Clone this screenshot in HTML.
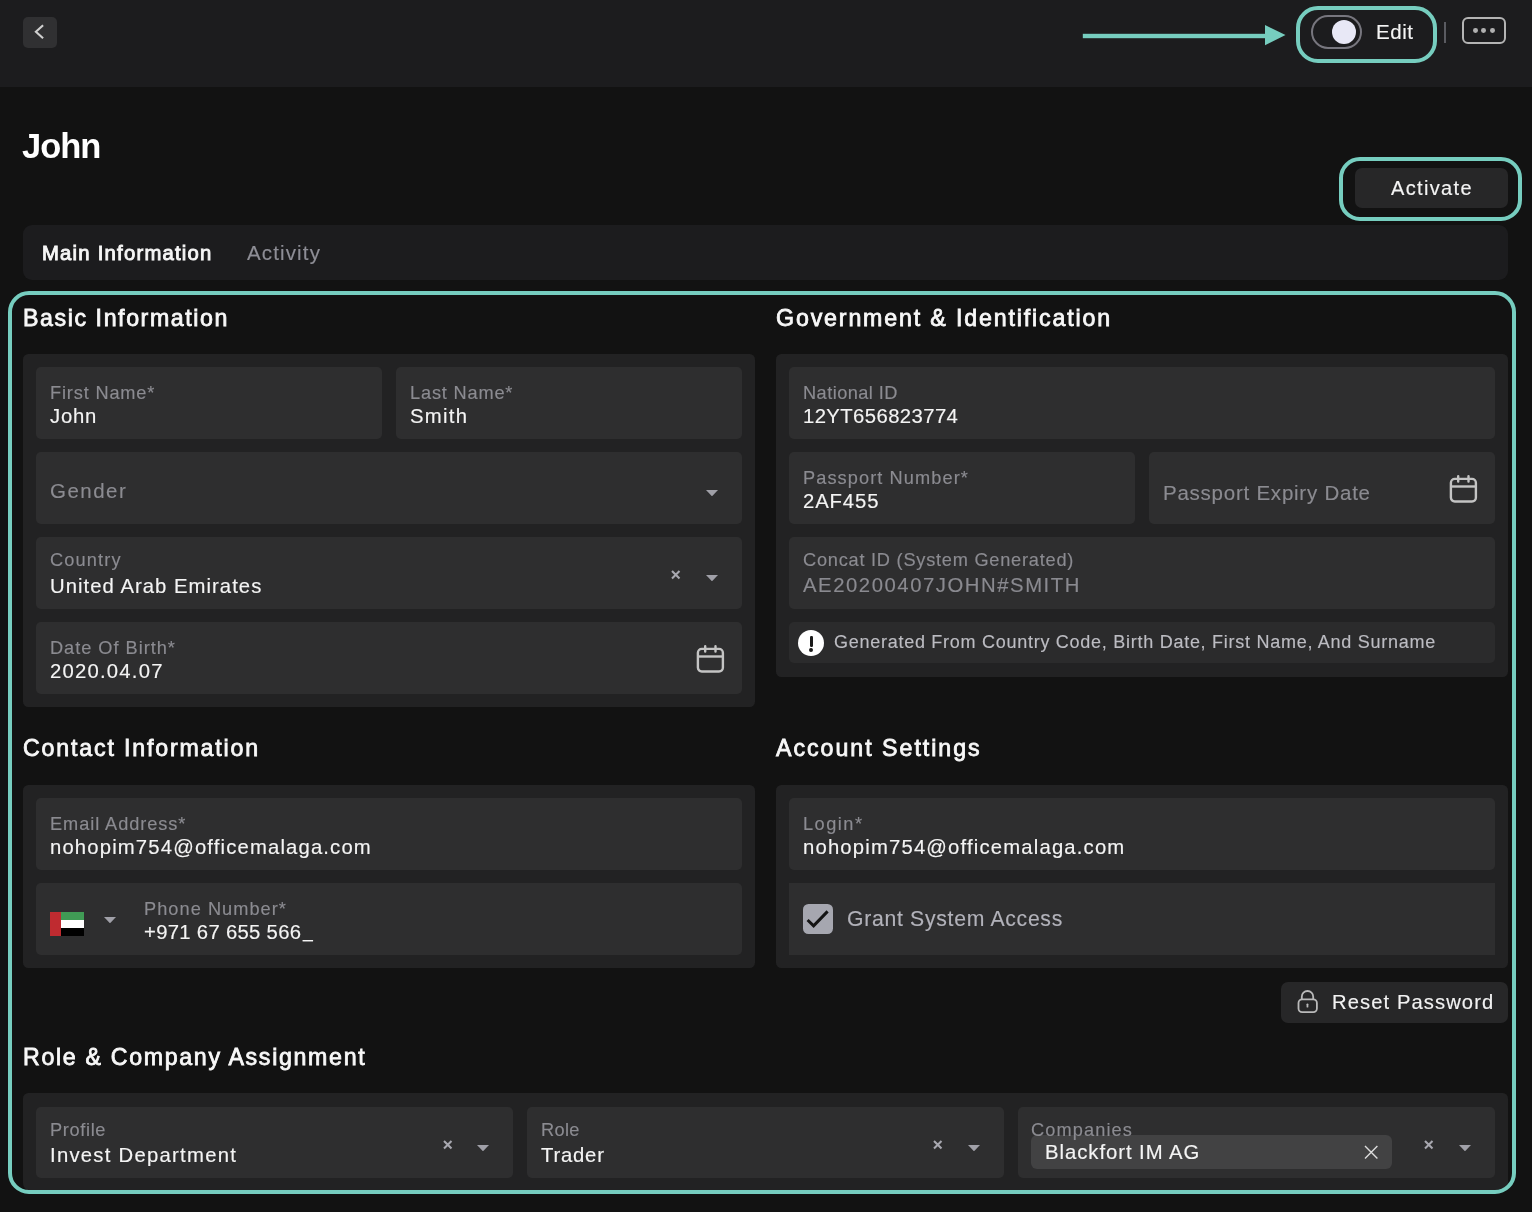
<!DOCTYPE html>
<html lang="en"><head><meta charset="utf-8"><title>John</title>
<style>
html,body{margin:0;padding:0;background:#121212;}
body{width:1532px;height:1212px;position:relative;overflow:hidden;font-family:"Liberation Sans",sans-serif;}
body>div,body>svg,body>span{position:absolute;display:block}
.t{white-space:pre;margin:0;padding:0;will-change:transform}
</style></head><body>
<div style="left:0px;top:0px;width:1532px;height:87px;background:#1c1c1e;border-radius:0px;"></div>
<div style="left:23px;top:17px;width:34px;height:31px;background:#303032;border-radius:5px;"></div>
<svg style="left:23px;top:17px" width="34" height="31" viewBox="0 0 34 31"><path d="M19.3 8.9 L12.9 14.7 L19.3 20.5" fill="none" stroke="#d0d0d0" stroke-width="2.1" stroke-linecap="square" stroke-linejoin="miter"/></svg>
<svg style="left:1080px;top:20px" width="210" height="32" viewBox="0 0 210 32"><rect x="2.8" y="13.8" width="184" height="4.4" fill="#76cdbf"/><path d="M185 4.9 L205.5 15.1 L185 25.2 Z" fill="#76cdbf"/></svg>
<div style="left:1295.7px;top:5.7px;width:141.8px;height:57.5px;box-sizing:border-box;border:4px solid #76cdbf;border-radius:22px"></div>
<div style="left:1311px;top:15px;width:51px;height:34px;box-sizing:border-box;border:2px solid #77767e;border-radius:17px"></div>
<div style="left:1331.8px;top:19.8px;width:24.6px;height:24.6px;background:#e8e8f6;border-radius:50%"></div>
<span class="t " style="left:1376.00px;top:18px;font-size:20.5px;line-height:27px;color:#f4f4f4;letter-spacing:0.559px;-webkit-text-stroke:0.15px #f4f4f4;">Edit</span>
<div style="left:1444px;top:22px;width:2.2000000000000455px;height:21px;background:#5a5b61;border-radius:0px;"></div>
<div style="left:1461.6px;top:16.5px;width:44.5px;height:27.7px;box-sizing:border-box;border:2px solid #b4b4b4;border-radius:6px"></div>
<div style="left:1472.8px;top:28.3px;width:4.8px;height:4.8px;border-radius:50%;background:#b0b0b0"></div>
<div style="left:1481.3999999999999px;top:28.3px;width:4.8px;height:4.8px;border-radius:50%;background:#b0b0b0"></div>
<div style="left:1489.8px;top:28.3px;width:4.8px;height:4.8px;border-radius:50%;background:#b0b0b0"></div>
<span class="t " style="left:22.40px;top:125px;font-size:34.5px;line-height:42px;color:#ffffff;letter-spacing:-1.007px;font-weight:700;">John</span>
<div style="left:1339px;top:156.7px;width:183.3px;height:64.7px;box-sizing:border-box;border:4px solid #76cdbf;border-radius:21px"></div>
<div style="left:1355px;top:168px;width:153px;height:40px;background:#272728;border-radius:7px;"></div>
<span class="t " style="left:1391.00px;top:175px;font-size:20px;line-height:26px;color:#f4f4f4;letter-spacing:1.337px;-webkit-text-stroke:0.15px #f4f4f4;">Activate</span>
<div style="left:23px;top:225px;width:1485px;height:55px;background:#1c1c1e;border-radius:9px;"></div>
<span class="t " style="left:42.30px;top:240px;font-size:20.3px;line-height:26px;color:#f6f6f6;letter-spacing:1.220px;-webkit-text-stroke:0.9px #f6f6f6;">Main Information</span>
<span class="t " style="left:246.70px;top:239px;font-size:20.5px;line-height:27px;color:#8e8e96;letter-spacing:1.140px;-webkit-text-stroke:0.15px #8e8e96;">Activity</span>
<span class="t " style="left:23.20px;top:303px;font-size:23.2px;line-height:30px;color:#f8f8f8;letter-spacing:1.579px;-webkit-text-stroke:0.8px #f8f8f8;">Basic Information</span>
<span class="t " style="left:776.20px;top:303px;font-size:23.2px;line-height:30px;color:#f8f8f8;letter-spacing:1.847px;-webkit-text-stroke:0.8px #f8f8f8;">Government &amp; Identification</span>
<div style="left:23px;top:354px;width:732px;height:353px;background:#222223;border-radius:5.5px;"></div>
<div style="left:776px;top:354px;width:732px;height:323px;background:#222223;border-radius:5.5px;"></div>
<div style="left:36px;top:367px;width:346.3px;height:72px;background:#2e2e2f;border-radius:5px;"></div>
<span class="t " style="left:50.10px;top:381px;font-size:18.2px;line-height:24px;color:#8b8b91;letter-spacing:0.834px;-webkit-text-stroke:0.15px #8b8b91;">First Name*</span>
<span class="t " style="left:50.00px;top:403px;font-size:20.3px;line-height:26px;color:#f4f4f4;letter-spacing:0.763px;-webkit-text-stroke:0.15px #f4f4f4;">John</span>
<div style="left:395.7px;top:367px;width:346.3px;height:72px;background:#2e2e2f;border-radius:5px;"></div>
<span class="t " style="left:410.00px;top:381px;font-size:18.2px;line-height:24px;color:#8b8b91;letter-spacing:0.823px;-webkit-text-stroke:0.15px #8b8b91;">Last Name*</span>
<span class="t " style="left:410.00px;top:403px;font-size:20.3px;line-height:26px;color:#f4f4f4;letter-spacing:1.278px;-webkit-text-stroke:0.15px #f4f4f4;">Smith</span>
<div style="left:36px;top:452px;width:706px;height:72px;background:#2e2e2f;border-radius:5px;"></div>
<span class="t " style="left:50.00px;top:477px;font-size:20.5px;line-height:27px;color:#8b8b91;letter-spacing:1.466px;-webkit-text-stroke:0.15px #8b8b91;">Gender</span>
<svg style="left:706px;top:490px" width="12" height="6.3" viewBox="0 0 12 6.3"><path d="M0 0 H12 L6.0 6.3 Z" fill="#a0a0a8"/></svg>
<div style="left:36px;top:537px;width:706px;height:72px;background:#2e2e2f;border-radius:5px;"></div>
<span class="t " style="left:50.00px;top:548px;font-size:18.2px;line-height:24px;color:#8b8b91;letter-spacing:1.147px;-webkit-text-stroke:0.15px #8b8b91;">Country</span>
<span class="t " style="left:50.10px;top:573px;font-size:20.3px;line-height:26px;color:#f4f4f4;letter-spacing:1.036px;-webkit-text-stroke:0.15px #f4f4f4;">United Arab Emirates</span>
<svg style="left:670.45px;top:568.65px" width="11.5" height="11.5" viewBox="-5.75 -5.75 11.5 11.5"><path d="M-3.75 -3.75 L3.75 3.75 M3.75 -3.75 L-3.75 3.75" stroke="#a8a8b0" stroke-width="2.1" fill="none"/></svg>
<svg style="left:706px;top:574.7px" width="12" height="6.3" viewBox="0 0 12 6.3"><path d="M0 0 H12 L6.0 6.3 Z" fill="#a0a0a8"/></svg>
<div style="left:36px;top:622px;width:706px;height:72px;background:#2e2e2f;border-radius:5px;"></div>
<span class="t " style="left:50.00px;top:636px;font-size:18.2px;line-height:24px;color:#8b8b91;letter-spacing:0.979px;-webkit-text-stroke:0.15px #8b8b91;">Date Of Birth*</span>
<span class="t " style="left:50.30px;top:658px;font-size:20.3px;line-height:26px;color:#f4f4f4;letter-spacing:1.222px;-webkit-text-stroke:0.15px #f4f4f4;">2020.04.07</span>
<svg style="left:695px;top:643px" width="32" height="32" viewBox="-2 -2 32 32"><rect x="0.9" y="3.9" width="25" height="22.6" rx="3.9" fill="none" stroke="#c4c4c4" stroke-width="2.4"/><path d="M0.9 11.5 H25.9" stroke="#c4c4c4" stroke-width="2.4" fill="none"/><path d="M8.2 1.3 V6.6 M18.5 1.3 V6.6" stroke="#c4c4c4" stroke-width="2.4" stroke-linecap="round" fill="none"/></svg>
<div style="left:789px;top:367px;width:706px;height:72px;background:#2e2e2f;border-radius:5px;"></div>
<span class="t " style="left:803.00px;top:381px;font-size:18.2px;line-height:24px;color:#8b8b91;letter-spacing:0.446px;-webkit-text-stroke:0.15px #8b8b91;">National ID</span>
<span class="t " style="left:803.00px;top:403px;font-size:20.3px;line-height:26px;color:#f4f4f4;letter-spacing:0.405px;-webkit-text-stroke:0.15px #f4f4f4;">12YT656823774</span>
<div style="left:789px;top:452px;width:346.29999999999995px;height:72px;background:#2e2e2f;border-radius:5px;"></div>
<span class="t " style="left:803.00px;top:466px;font-size:18.2px;line-height:24px;color:#8b8b91;letter-spacing:1.087px;-webkit-text-stroke:0.15px #8b8b91;">Passport Number*</span>
<span class="t " style="left:803.00px;top:488px;font-size:20.3px;line-height:26px;color:#f4f4f4;letter-spacing:0.882px;-webkit-text-stroke:0.15px #f4f4f4;">2AF455</span>
<div style="left:1148.7px;top:452px;width:346.29999999999995px;height:72px;background:#2e2e2f;border-radius:5px;"></div>
<span class="t " style="left:1163.00px;top:479px;font-size:20.5px;line-height:27px;color:#8b8b91;letter-spacing:0.760px;-webkit-text-stroke:0.15px #8b8b91;">Passport Expiry Date</span>
<svg style="left:1448px;top:473px" width="32" height="32" viewBox="-2 -2 32 32"><rect x="0.9" y="3.9" width="25" height="22.6" rx="3.9" fill="none" stroke="#c4c4c4" stroke-width="2.4"/><path d="M0.9 11.5 H25.9" stroke="#c4c4c4" stroke-width="2.4" fill="none"/><path d="M8.2 1.3 V6.6 M18.5 1.3 V6.6" stroke="#c4c4c4" stroke-width="2.4" stroke-linecap="round" fill="none"/></svg>
<div style="left:789px;top:537px;width:706px;height:72px;background:#2e2e2f;border-radius:5px;"></div>
<span class="t " style="left:803.00px;top:548px;font-size:18.2px;line-height:24px;color:#8b8b91;letter-spacing:0.765px;-webkit-text-stroke:0.15px #8b8b91;">Concat ID (System Generated)</span>
<span class="t " style="left:803.00px;top:572px;font-size:20.3px;line-height:26px;color:#8a8a90;letter-spacing:1.553px;-webkit-text-stroke:0.15px #8a8a90;">AE20200407JOHN#SMITH</span>
<div style="left:789px;top:622px;width:706px;height:41px;background:#2b2b2c;border-radius:5px;"></div>
<div style="left:798px;top:630px;width:26px;height:26px;border-radius:50%;background:#fff"></div>
<div style="left:809.6px;top:636.2px;width:3.3999999999999773px;height:10.699999999999932px;background:#1a1a1a;border-radius:1.2px;"></div>
<div style="left:809.4px;top:647.8px;width:3.8px;height:3.8px;border-radius:50%;background:#1a1a1a"></div>
<span class="t " style="left:833.80px;top:630px;font-size:18px;line-height:24px;color:#bcbcc2;letter-spacing:0.730px;-webkit-text-stroke:0.15px #bcbcc2;">Generated From Country Code, Birth Date, First Name, And Surname</span>
<span class="t " style="left:23.20px;top:733px;font-size:23.2px;line-height:30px;color:#f8f8f8;letter-spacing:1.824px;-webkit-text-stroke:0.8px #f8f8f8;">Contact Information</span>
<span class="t " style="left:776.20px;top:733px;font-size:23.2px;line-height:30px;color:#f8f8f8;letter-spacing:1.980px;-webkit-text-stroke:0.8px #f8f8f8;">Account Settings</span>
<div style="left:23px;top:785px;width:732px;height:183px;background:#222223;border-radius:5.5px;"></div>
<div style="left:776px;top:785px;width:732px;height:183px;background:#222223;border-radius:5.5px;"></div>
<div style="left:36px;top:798px;width:706px;height:72px;background:#2e2e2f;border-radius:5px;"></div>
<span class="t " style="left:50.00px;top:812px;font-size:18.2px;line-height:24px;color:#8b8b91;letter-spacing:0.930px;-webkit-text-stroke:0.15px #8b8b91;">Email Address*</span>
<span class="t " style="left:50.00px;top:834px;font-size:20.3px;line-height:26px;color:#f4f4f4;letter-spacing:1.151px;-webkit-text-stroke:0.15px #f4f4f4;">nohopim754@officemalaga.com</span>
<div style="left:36px;top:883px;width:706px;height:72px;background:#2e2e2f;border-radius:5px;"></div>
<div style="left:50px;top:912px;width:34.2px;height:23.799999999999955px;background:#ffffff;border-radius:0px;"></div>
<div style="left:50px;top:912px;width:34.2px;height:8.100000000000023px;background:#409b55;border-radius:0px;"></div>
<div style="left:50px;top:928.3px;width:34.2px;height:7.5px;background:#000;border-radius:0px;"></div>
<div style="left:50px;top:912px;width:11.299999999999997px;height:23.799999999999955px;background:#bf2b30;border-radius:0px;"></div>
<svg style="left:104px;top:916.8px" width="12" height="6.3" viewBox="0 0 12 6.3"><path d="M0 0 H12 L6.0 6.3 Z" fill="#a0a0a8"/></svg>
<span class="t " style="left:144.00px;top:897px;font-size:18.2px;line-height:24px;color:#8b8b91;letter-spacing:1.042px;-webkit-text-stroke:0.15px #8b8b91;">Phone Number*</span>
<span class="t " style="left:144.00px;top:919px;font-size:20.3px;line-height:26px;color:#f4f4f4;letter-spacing:0.303px;-webkit-text-stroke:0.15px #f4f4f4;">+971 67 655 566</span>
<span class="t " style="left:303.48px;top:919px;font-size:17.6px;line-height:24px;color:#f4f4f4;letter-spacing:0.000px;-webkit-text-stroke:0.15px #f4f4f4;">_</span>
<div style="left:789px;top:798px;width:706px;height:72px;background:#2e2e2f;border-radius:5px;"></div>
<span class="t " style="left:803.00px;top:812px;font-size:18.2px;line-height:24px;color:#8b8b91;letter-spacing:1.477px;-webkit-text-stroke:0.15px #8b8b91;">Login*</span>
<span class="t " style="left:803.00px;top:834px;font-size:20.3px;line-height:26px;color:#f4f4f4;letter-spacing:1.171px;-webkit-text-stroke:0.15px #f4f4f4;">nohopim754@officemalaga.com</span>
<div style="left:789px;top:883px;width:706px;height:72px;background:#2e2e2f;border-radius:0px;"></div>
<div style="left:803px;top:904px;width:30px;height:30px;background:#a6a7b0;border-radius:5.5px;"></div>
<svg style="left:803px;top:904px" width="30" height="30" viewBox="0 0 30 30"><path d="M4.6 16 L10.6 21.8 L24.6 7.4" fill="none" stroke="#141414" stroke-width="3" stroke-linejoin="miter"/></svg>
<span class="t " style="left:847.20px;top:905px;font-size:21.2px;line-height:27px;color:#b2b2ba;letter-spacing:0.708px;-webkit-text-stroke:0.15px #b2b2ba;">Grant System Access</span>
<div style="left:1281px;top:982px;width:227px;height:41px;background:#272728;border-radius:7px;"></div>
<svg style="left:1295px;top:988px" width="26" height="28" viewBox="0 0 26 28"><rect x="3.5" y="11.4" width="18.4" height="12.8" rx="3.6" fill="none" stroke="#bababa" stroke-width="1.8"/><path d="M6.8 11.4 V8.7 a5.7 5.7 0 0 1 11.4 0 V11.4" fill="none" stroke="#bababa" stroke-width="1.8"/><path d="M12.45 16.3 V18.7" stroke="#bababa" stroke-width="1.8" stroke-linecap="round"/></svg>
<span class="t " style="left:1332.40px;top:989px;font-size:20.2px;line-height:26px;color:#f2f2f2;letter-spacing:1.094px;-webkit-text-stroke:0.15px #f2f2f2;">Reset Password</span>
<span class="t " style="left:23.20px;top:1042px;font-size:23.2px;line-height:30px;color:#f8f8f8;letter-spacing:1.669px;-webkit-text-stroke:0.8px #f8f8f8;">Role &amp; Company Assignment</span>
<div style="left:23px;top:1093px;width:1485px;height:99px;background:#222223;border-radius:0px;border-radius:5.5px 5.5px 9px 9px;"></div>
<div style="left:36px;top:1107px;width:477.4px;height:71px;background:#2e2e2f;border-radius:5px;"></div>
<span class="t " style="left:50.00px;top:1118px;font-size:18.2px;line-height:24px;color:#8b8b91;letter-spacing:0.650px;-webkit-text-stroke:0.15px #8b8b91;">Profile</span>
<span class="t " style="left:50.00px;top:1142px;font-size:20.3px;line-height:26px;color:#f4f4f4;letter-spacing:1.259px;-webkit-text-stroke:0.15px #f4f4f4;">Invest Department</span>
<svg style="left:442.25px;top:1138.75px" width="11.5" height="11.5" viewBox="-5.75 -5.75 11.5 11.5"><path d="M-3.75 -3.75 L3.75 3.75 M3.75 -3.75 L-3.75 3.75" stroke="#a8a8b0" stroke-width="2.1" fill="none"/></svg>
<svg style="left:476.5px;top:1144.6px" width="12" height="6.3" viewBox="0 0 12 6.3"><path d="M0 0 H12 L6.0 6.3 Z" fill="#a0a0a8"/></svg>
<div style="left:526.8px;top:1107px;width:477.4000000000001px;height:71px;background:#2e2e2f;border-radius:5px;"></div>
<span class="t " style="left:540.50px;top:1118px;font-size:18.2px;line-height:24px;color:#8b8b91;letter-spacing:0.354px;-webkit-text-stroke:0.15px #8b8b91;">Role</span>
<span class="t " style="left:540.50px;top:1142px;font-size:20.3px;line-height:26px;color:#f4f4f4;letter-spacing:0.794px;-webkit-text-stroke:0.15px #f4f4f4;">Trader</span>
<svg style="left:932.35px;top:1138.75px" width="11.5" height="11.5" viewBox="-5.75 -5.75 11.5 11.5"><path d="M-3.75 -3.75 L3.75 3.75 M3.75 -3.75 L-3.75 3.75" stroke="#a8a8b0" stroke-width="2.1" fill="none"/></svg>
<svg style="left:968px;top:1144.6px" width="12" height="6.3" viewBox="0 0 12 6.3"><path d="M0 0 H12 L6.0 6.3 Z" fill="#a0a0a8"/></svg>
<div style="left:1017.6px;top:1107px;width:477.4px;height:71px;background:#2e2e2f;border-radius:5px;"></div>
<div style="left:1031px;top:1135px;width:361px;height:34px;background:#424243;border-radius:6px;"></div>
<span class="t " style="left:1031.00px;top:1118px;font-size:18.2px;line-height:24px;color:#8b8b91;letter-spacing:1.118px;-webkit-text-stroke:0.15px #8b8b91;">Companies</span>
<span class="t " style="left:1045.00px;top:1139px;font-size:20.3px;line-height:26px;color:#f4f4f4;letter-spacing:0.957px;-webkit-text-stroke:0.15px #f4f4f4;">Blackfort IM AG</span>
<svg style="left:1363.3px;top:1144.3px" width="16.4" height="16.4" viewBox="-8.2 -8.2 16.4 16.4"><path d="M-6.2 -6.2 L6.2 6.2 M6.2 -6.2 L-6.2 6.2" stroke="#dcdcdc" stroke-width="1.4" fill="none"/></svg>
<svg style="left:1423.25px;top:1138.75px" width="11.5" height="11.5" viewBox="-5.75 -5.75 11.5 11.5"><path d="M-3.75 -3.75 L3.75 3.75 M3.75 -3.75 L-3.75 3.75" stroke="#a8a8b0" stroke-width="2.1" fill="none"/></svg>
<svg style="left:1459px;top:1144.6px" width="12" height="6.3" viewBox="0 0 12 6.3"><path d="M0 0 H12 L6.0 6.3 Z" fill="#a0a0a8"/></svg>
<div style="left:8px;top:290.6px;width:1508.2px;height:903.6px;box-sizing:border-box;border:4.2px solid #76cdbf;border-radius:21px"></div>
</body></html>
